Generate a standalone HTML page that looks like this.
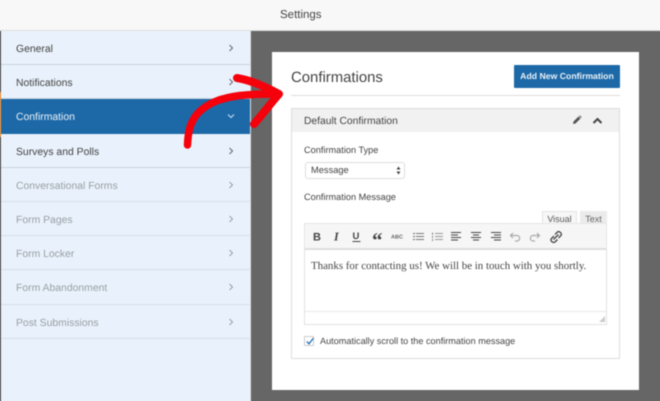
<!DOCTYPE html>
<html><head><meta charset="utf-8">
<style>
*{box-sizing:border-box}
html,body{margin:0;padding:0;width:660px;height:401px;overflow:hidden}
body{background:#666;font-family:"Liberation Sans",sans-serif;color:#444;text-rendering:geometricPrecision}
#clip{position:relative;width:660px;height:401px;overflow:hidden;contain:paint}
#wrap{position:absolute;left:-4px;top:-4px;width:668px;height:409px;filter:blur(.45px);overflow:hidden;background:#666}
#in{position:absolute;left:4px;top:4px;width:660px;height:401px}
.a{position:absolute;white-space:nowrap}
#top{left:-4px;top:-4px;width:668px;height:35px;background:#f8f8f8;border-bottom:1px solid #ddd}
#side{left:1px;top:31px;width:250px;height:374px;background:#e9f2fc;border-right:1px solid #ddd}
.it{position:absolute;left:0;width:249px;font-size:10.4px;line-height:37px;padding-left:15px;color:#444;border-bottom:1px solid #c9d3de;height:34.2px}
.it.d{color:#9a9ea3;border-bottom-color:#d7e0ea}
.it.on{background:#1d69a8;color:#e8f1f8;border-bottom:0}
.it svg{position:absolute;left:227px;top:13px}
.lab{font-size:9.2px;color:#444}
</style></head><body>
<div id="clip"><div id="wrap"><div id="in">
<div class="a" id="top"></div>
<div class="a" style="left:280px;top:8px;font-size:11.5px;line-height:14px;color:#444">Settings</div>
<div class="a" style="left:-4px;top:31px;width:5px;height:374px;background:#555"></div>
<div class="a" style="left:-4px;top:92px;width:5px;height:45px;background:#e8923f"></div>
<div class="a" id="side">
<div class="it" style="top:0">General<svg width="6" height="8" viewBox="0 0 6 8"><path d="M1.5 1L4.5 4L1.5 7" fill="none" stroke="#666" stroke-width="1"/></svg></div>
<div class="it" style="top:34.2px">Notifications<svg width="6" height="8" viewBox="0 0 6 8"><path d="M1.5 1L4.5 4L1.5 7" fill="none" stroke="#666" stroke-width="1"/></svg></div>
<div class="it on" style="top:68px;height:34.5px">Confirmation<svg style="left:226px;top:14px" width="8" height="6" viewBox="0 0 8 6"><path d="M1 1.5L4 4.5L7 1.5" fill="none" stroke="#cfe0ee" stroke-width="1"/></svg></div>
<div class="it" style="top:102.6px">Surveys and Polls<svg width="6" height="8" viewBox="0 0 6 8"><path d="M1.5 1L4.5 4L1.5 7" fill="none" stroke="#666" stroke-width="1"/></svg></div>
<div class="it d" style="top:136.8px">Conversational Forms<svg width="6" height="8" viewBox="0 0 6 8"><path d="M1.5 1L4.5 4L1.5 7" fill="none" stroke="#9a9ea3" stroke-width="1"/></svg></div>
<div class="it d" style="top:171px">Form Pages<svg width="6" height="8" viewBox="0 0 6 8"><path d="M1.5 1L4.5 4L1.5 7" fill="none" stroke="#9a9ea3" stroke-width="1"/></svg></div>
<div class="it d" style="top:205.2px">Form Locker<svg width="6" height="8" viewBox="0 0 6 8"><path d="M1.5 1L4.5 4L1.5 7" fill="none" stroke="#9a9ea3" stroke-width="1"/></svg></div>
<div class="it d" style="top:239.4px">Form Abandonment<svg width="6" height="8" viewBox="0 0 6 8"><path d="M1.5 1L4.5 4L1.5 7" fill="none" stroke="#9a9ea3" stroke-width="1"/></svg></div>
<div class="it d" style="top:273.6px">Post Submissions<svg width="6" height="8" viewBox="0 0 6 8"><path d="M1.5 1L4.5 4L1.5 7" fill="none" stroke="#9a9ea3" stroke-width="1"/></svg></div>
</div>

<div class="a" style="left:272px;top:52px;width:367px;height:338px;background:#fff"></div>
<div class="a" style="left:291px;top:68px;font-size:14.9px;line-height:20px;color:#444">Confirmations</div>
<div class="a" style="left:291px;top:95px;width:329px;height:1px;background:#ddd"></div>
<div class="a" style="left:514px;top:65px;width:106px;height:23px;background:#1d69a8;border-radius:1px;color:#e8f1f8;font-weight:bold;font-size:8.7px;line-height:23px;text-align:center">Add New Confirmation</div>

<div class="a" style="left:291px;top:108px;width:329px;height:251px;border:1px solid #ddd;background:#fff"></div>
<div class="a" style="left:292px;top:109px;width:327px;height:23px;background:#f1f1f1"></div>
<div class="a" style="left:304px;top:115px;font-size:10.3px;line-height:14px;color:#444">Default Confirmation</div>
<svg class="a" style="left:572px;top:115px" width="10" height="10" viewBox="0 0 10 10"><path d="M1 9L1.5 6.5L6.5 1.5L8.5 3.5L3.5 8.5Z" fill="#555"/><path d="M7 1L8 0.5L9.5 2L9 3Z" fill="#555"/></svg>
<svg class="a" style="left:592px;top:117px" width="11" height="8" viewBox="0 0 11 8"><path d="M1.5 6L5.5 2L9.5 6" fill="none" stroke="#444" stroke-width="2"/></svg>

<div class="a lab" style="left:304px;top:144px;line-height:13px">Confirmation Type</div>
<div class="a" style="left:305px;top:162px;width:100px;height:17px;border:1px solid #ddd;border-radius:3px;background:#fff;font-size:9.3px;line-height:15px;padding-left:5px;color:#444">Message</div>
<svg class="a" style="left:396px;top:166px" width="5" height="9" viewBox="0 0 5 9"><path d="M2.5 0.5L4.5 3.5H.5Z M.5 5.5H4.5L2.5 8.5Z" fill="#444"/></svg>
<div class="a lab" style="left:304px;top:191px;line-height:13px">Confirmation Message</div>

<div class="a" style="left:542px;top:211px;width:35px;height:14px;background:#f7f7f7;border:1px solid #e4e4e4;font-size:9px;line-height:15px;text-align:center;color:#555">Visual</div>
<div class="a" style="left:580px;top:211px;width:27px;height:14px;background:#ebebeb;font-size:9px;line-height:16px;text-align:center;color:#666">Text</div>
<div class="a" style="left:304px;top:223px;width:303px;height:102px;border:1px solid #e2e2e2;background:#fff"></div>
<div class="a" style="left:304px;top:223px;width:303px;height:27px;background:#f6f6f6;border:1px solid #e6e6e6;border-bottom:2px solid #dedede"></div>

<svg class="a" style="left:304px;top:223px" width="270" height="27" viewBox="0 0 270 27" fill="none" stroke="#555">
<text x="9" y="17.5" font-family="Liberation Sans" font-weight="bold" font-size="11" fill="#444" stroke="none">B</text>
<text x="30" y="17.5" font-family="Liberation Serif" font-style="italic" font-weight="bold" font-size="12" fill="#444" stroke="none">I</text>
<text x="48.5" y="16" font-family="Liberation Sans" font-weight="bold" font-size="9.5" fill="#444" stroke="none">U</text>
<path d="M48.5 18.5H56.5" stroke="#444" stroke-width="1"/>
<text x="68" y="24" font-family="Liberation Serif" font-weight="bold" font-size="21" fill="#444" stroke="none">“</text>
<text x="87" y="15.5" font-family="Liberation Sans" font-size="5.5" font-weight="bold" fill="#666" stroke="none">ABC</text>
<path d="M112 10.5H120M112 13.5H120M112 16.5H120" stroke="#777"/><path d="M109 10.5H111M109 13.5H111M109 16.5H111" stroke="#666"/>
<path d="M131 10.5H139M131 13.5H139M131 16.5H139" stroke="#999"/><path d="M128.5 9.5V12M128.5 13V15M128.5 16V18" stroke="#888"/>
<path d="M147 9.5H157M147 12H154M147 14.5H157M147 17H154" stroke="#444"/>
<path d="M167 9.5H177M169 12H175M167 14.5H177M169 17H175" stroke="#444"/>
<path d="M187 9.5H197M190 12H197M187 14.5H197M190 17H197" stroke="#444"/>
<path d="M209 10L206.5 12.5L209 15M207 12.5H213C216.5 12.5 216.5 18 213 18H211" stroke="#aaa" stroke-width="1.2"/>
<path d="M233 10L235.5 12.5L233 15M235 12.5H229C225.5 12.5 225.5 18 229 18H231" stroke="#aaa" stroke-width="1.2"/>
<path d="M251 11.5L253.5 9C255 7.5 258.5 10.5 257 12.5L254.5 15M253.5 16.5L251 19C249 20.5 245.5 17.5 247.5 15.5L250 13M249.5 16.5L254.5 11.5" stroke="#444" stroke-width="1.3"/>
</svg>

<div class="a" style="left:311px;top:259px;font-family:'Liberation Serif',serif;font-size:10.9px;line-height:15px;color:#444">Thanks for contacting us! We will be in touch with you shortly.</div>
<div class="a" style="left:305px;top:311px;width:301px;height:1px;background:#e8e8e8"></div>
<svg class="a" style="left:598px;top:315px" width="8" height="8" viewBox="0 0 8 8"><path d="M7 1V7H1Z" fill="#ccc"/></svg>

<div class="a" style="left:304px;top:336px;width:10px;height:10px;border:1px solid #ccc;border-radius:1px;background:#fff"></div>
<svg class="a" style="left:304px;top:335px" width="12" height="12" viewBox="0 0 12 12"><path d="M2.8 6.5L5 8.8L9.5 3" fill="none" stroke="#2b78b8" stroke-width="1.4"/></svg>
<div class="a" style="left:320px;top:335px;font-size:9.15px;line-height:13px;color:#444">Automatically scroll to the confirmation message</div>

<svg class="a" style="left:0;top:0" width="660" height="401" viewBox="0 0 660 401">
<path d="M187.5 145C188 132 190 122 198 113C209 102 222 98 240 95.5C252 94 264 94 276 94" fill="none" stroke="#f5000b" stroke-width="7.5" stroke-linecap="round"/>
<path d="M237 78C250 80 266 87 279 94C271 103 262 115 254 124" fill="none" stroke="#f5000b" stroke-width="8" stroke-linecap="round" stroke-linejoin="round"/>
</svg>
</div></div></div>
</body></html>
